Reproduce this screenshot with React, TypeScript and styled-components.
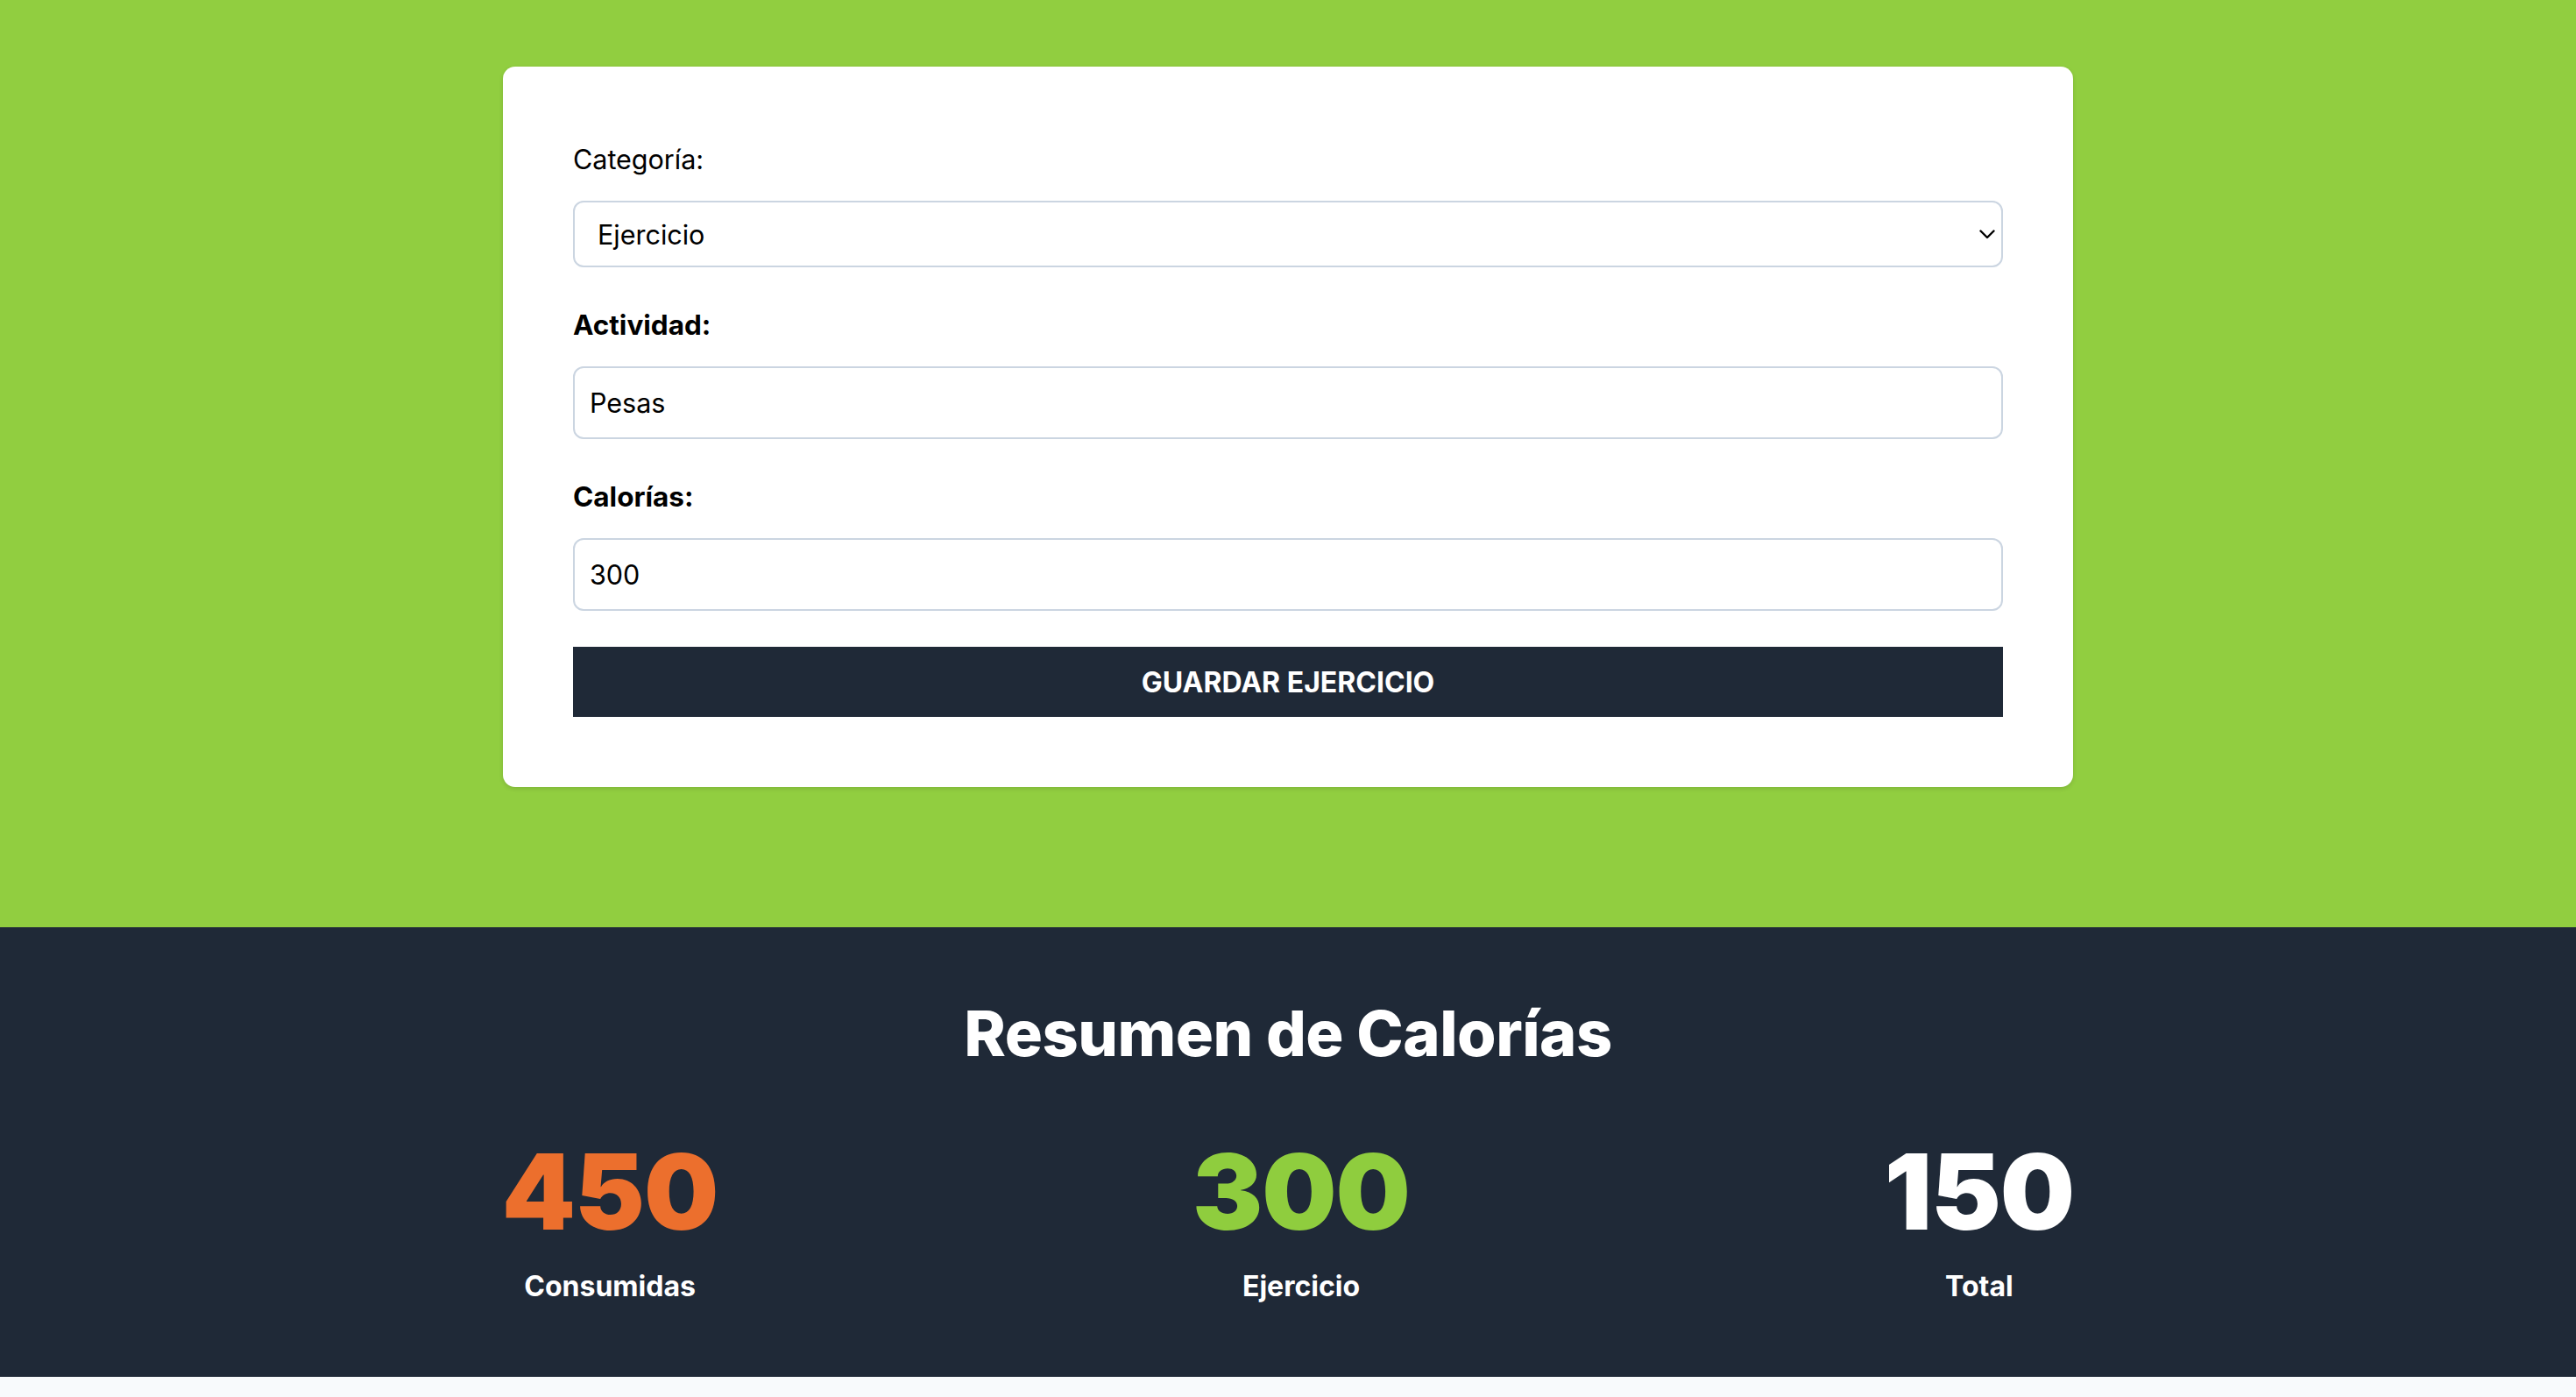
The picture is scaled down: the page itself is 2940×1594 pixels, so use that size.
import React from "react";
import styled, { createGlobalStyle } from "styled-components";

const GlobalStyle = createGlobalStyle`
  html, body {
    margin: 0;
    padding: 0;
    background: #f8fafc;
    font-family: Inter, "Noto Sans", "Liberation Sans", sans-serif;
  }
  * { box-sizing: border-box; }
`;

const Page = styled.div`
  display: flex;
  flex-direction: column;
`;

const FormSection = styled.section`
  background: #91ce40;
  padding: 76px 0 160px;
`;

const Card = styled.form`
  width: 1792px;
  margin: 0 auto;
  background: #ffffff;
  border-radius: 14px;
  box-shadow: 0 2px 5px rgba(0, 0, 0, 0.12);
  padding: 83px 80px 80px;
  display: flex;
  flex-direction: column;
  gap: 43px;
`;

const Field = styled.div`
  display: flex;
  flex-direction: column;
  gap: 25px;
`;

const Label = styled.label<{ $bold?: boolean }>`
  font-size: ${(p) => (p.$bold ? "31.5px" : "30.5px")};
  line-height: 45px;
  color: #000000;
  font-weight: ${(p) => (p.$bold ? 700 : 400)};
`;

const SelectWrap = styled.div`
  position: relative;
  display: flex;
`;

const Select = styled.select`
  appearance: none;
  -webkit-appearance: none;
  width: 100%;
  height: 76px;
  border: 2px solid #cbd5e1;
  border-radius: 12px;
  background: #ffffff;
  padding: 0 40px 0 26px;
  font-family: inherit;
  font-size: 30.5px;
  color: #000000;
  outline: none;
`;

const Chevron = styled.svg`
  position: absolute;
  right: 9px;
  top: 50%;
  width: 18px;
  height: 11px;
  margin-top: -5px;
  pointer-events: none;
`;

const TextInput = styled.input`
  width: 100%;
  height: 83px;
  border: 2px solid #cbd5e1;
  border-radius: 12px;
  background: #ffffff;
  padding: 0 17px;
  font-family: inherit;
  font-size: 30.5px;
  color: #000000;
  outline: none;
`;

const SubmitButton = styled.button`
  height: 80px;
  border: none;
  border-radius: 0;
  background: #1f2937;
  color: #ffffff;
  font-family: inherit;
  font-size: 32px;
  font-weight: 700;
  text-transform: uppercase;
  cursor: pointer;
  margin-top: -2px;
`;

const SummarySection = styled.section`
  background: #1f2937;
  padding: 77px 0 81px;
  display: flex;
  flex-direction: column;
  align-items: center;
`;

const Heading = styled.h2`
  margin: 0 0 77px;
  font-size: 72px;
  line-height: 88px;
  font-weight: 800;
  letter-spacing: -0.5px;
  color: #ffffff;
  text-align: center;
`;

const Stats = styled.div`
  width: 2336px;
  display: flex;
  justify-content: space-around;
`;

const Stat = styled.div`
  display: flex;
  flex-direction: column;
  align-items: center;
  gap: 25px;
`;

const StatValue = styled.div<{ $color: string }>`
  font-size: 120px;
  line-height: 120px;
  font-weight: 900;
  letter-spacing: -1px;
  color: ${(p) => p.$color};
`;

const StatLabel = styled.div`
  font-size: 32px;
  line-height: 45px;
  font-weight: 700;
  color: #ffffff;
`;

const stats = [
  { value: "450", label: "Consumidas", color: "#ec6f2d" },
  { value: "300", label: "Ejercicio", color: "#8fcd3e" },
  { value: "150", label: "Total", color: "#ffffff" },
];

export default function App() {
  return (
    <Page>
      <GlobalStyle />
      <FormSection>
        <Card onSubmit={(e) => e.preventDefault()}>
          <Field>
            <Label htmlFor="categoria">Categoría:</Label>
            <SelectWrap>
              <Select id="categoria" defaultValue="ejercicio">
                <option value="comida">Comida</option>
                <option value="ejercicio">Ejercicio</option>
              </Select>
              <Chevron viewBox="0 0 18 11" fill="none">
                <path d="M1.5 1.5 L9 9 L16.5 1.5" stroke="#000" strokeWidth="2.4" strokeLinecap="round" strokeLinejoin="round" />
              </Chevron>
            </SelectWrap>
          </Field>
          <Field>
            <Label $bold htmlFor="actividad">Actividad:</Label>
            <TextInput id="actividad" type="text" defaultValue="Pesas" />
          </Field>
          <Field>
            <Label $bold htmlFor="calorias">Calorías:</Label>
            <TextInput id="calorias" type="number" defaultValue="300" />
          </Field>
          <SubmitButton type="submit">Guardar Ejercicio</SubmitButton>
        </Card>
      </FormSection>
      <SummarySection>
        <Heading>Resumen de Calorías</Heading>
        <Stats>
          {stats.map((s) => (
            <Stat key={s.label}>
              <StatValue $color={s.color}>{s.value}</StatValue>
              <StatLabel>{s.label}</StatLabel>
            </Stat>
          ))}
        </Stats>
      </SummarySection>
    </Page>
  );
}
